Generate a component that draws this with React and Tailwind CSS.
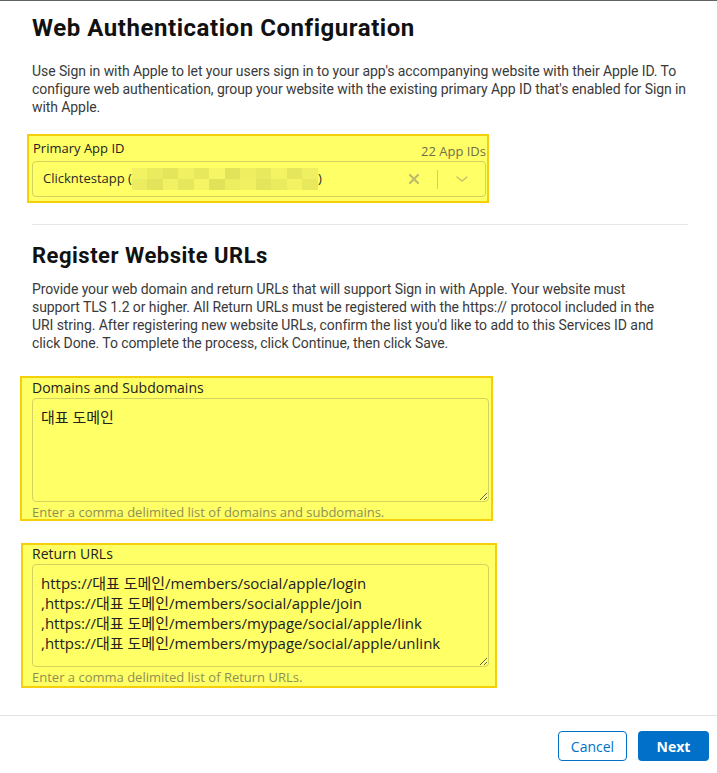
import React from "react";

const mosaic = [
  "#f2f262","#ebeb5f","#e5e55c","#f0f062","#e8e85d","#f5f565","#e3e35b","#eeee60","#e9e95e","#f3f363","#e6e65c","#efef61",
  "#ecec60","#e4e45c","#f1f163","#e7e75d","#f4f464","#e2e25a","#eded60","#f0f062","#e5e55c","#ebeb5f","#f2f262","#e8e85d",
];

function Mosaic() {
  return (
    <div className="grid grid-cols-12 w-[186px] h-[22px]">
      {mosaic.map((c, i) => (
        <div key={i} style={{ backgroundColor: c }} />
      ))}
    </div>
  );
}

export default function App() {
  const sans = "font-['Roboto',sans-serif]";
  const ui = "font-['Open_Sans','Noto_Sans_CJK_KR',sans-serif]";
  const returnUrls =
    "https://대표 도메인/members/social/apple/login\n,https://대표 도메인/members/social/apple/join\n,https://대표 도메인/members/mypage/social/apple/link\n,https://대표 도메인/members/mypage/social/apple/unlink";
  return (
    <div className="w-[717px] h-[773px] bg-white border-t border-[#5d6460] flex flex-col overflow-hidden">
      <div className={`flex-1 pl-8 pr-[29px] ${sans}`}>
        <h1 className="mt-[13px] text-[24px] leading-[28px] font-bold text-[#111111] tracking-[0.55px]">
          Web Authentication Configuration
        </h1>
        <p className="mt-[20px] text-[14px] leading-[18px] text-[#3a3a3a] tracking-[-0.08px]">
          Use Sign in with Apple to let your users sign in to your app's accompanying website with their Apple ID. To
          configure web authentication, group your website with the existing primary App ID that's enabled for Sign in
          with Apple.
        </p>

        <div className={`mt-[18px] ml-[-5px] w-[462px] h-[69px] border-2 border-[#f5cf0a] bg-[#ffff66] pl-[3px] pr-[1px] pt-[2px] ${ui}`}>
          <div className="flex items-end justify-between h-[23px]">
            <span className="pl-[1px] text-[13px] leading-[18px] text-[#222222] mb-[4px]">Primary App ID</span>
            <span className="text-[13px] leading-[18px] text-[#6f6f4a] mb-[1px]">22 App IDs</span>
          </div>
          <div className="w-[454px] h-[36px] border border-[#d2d25e] rounded-[4px] flex items-center pl-[10px]">
            <span className="text-[13px] text-[#2a2a2a]">Clickntestapp (</span>
            <Mosaic />
            <span className="text-[13px] text-[#2a2a2a]">)</span>
            <div className="ml-auto flex items-center h-full">
              <svg width="12" height="12" viewBox="0 0 12 12" className="mr-[17px]">
                <path d="M2 2 L10 10 M10 2 L2 10" stroke="#bcbc6a" strokeWidth="2.2" strokeLinecap="round" />
              </svg>
              <div className="w-px h-[19px] bg-[#cfcf62]" />
              <svg width="14" height="8" viewBox="0 0 14 8" className="ml-[17px] mr-[16px]">
                <path d="M2 2 L7 6 L12 2" stroke="#c4c46c" strokeWidth="1.6" fill="none" strokeLinecap="round" />
              </svg>
            </div>
          </div>
        </div>

        <div className="mt-[21px] h-px bg-[#e6e6e6]" />

        <h2 className="mt-[18px] text-[22px] leading-[26px] font-bold text-[#111111] tracking-[0.5px]">
          Register Website URLs
        </h2>
        <p className="mt-[11px] max-w-[630px] text-[14px] leading-[18px] text-[#3a3a3a] tracking-[-0.08px]">
          Provide your web domain and return URLs that will support Sign in with Apple. Your website must support TLS
          1.2 or higher. All Return URLs must be registered with the https:// protocol included in the URI string.
          After registering new website URLs, confirm the list you'd like to add to this Services ID and click Done. To
          complete the process, click Continue, then click Save.
        </p>

        <div className={`mt-[24px] ml-[-12px] w-[473px] h-[145px] border-2 border-[#f5cf0a] bg-[#ffff66] pl-[10px] pr-[2px] ${ui}`}>
          <div className="text-[14px] leading-[18px] text-[#222222] h-[20px] pt-[1px]">Domains and Subdomains</div>
          <textarea
            readOnly
            defaultValue="대표 도메인"
            className="block w-[457px] h-[104px] border border-[#d2d25e] rounded-[4px] bg-transparent px-[8px] pt-[8px] text-[15px] leading-[20px] text-[#222222] resize-y outline-none"
          />
          <div className="text-[13px] leading-[18px] text-[#8f8f55] mt-px">
            Enter a comma delimited list of domains and subdomains.
          </div>
        </div>

        <div className={`mt-[22px] ml-[-11px] w-[476px] h-[145px] border-2 border-[#f5cf0a] bg-[#ffff66] pl-[9px] pr-[2px] ${ui}`}>
          <div className="text-[14px] leading-[18px] text-[#222222] h-[19px]">Return URLs</div>
          <textarea
            readOnly
            defaultValue={returnUrls}
            className="block w-[457px] h-[103px] border border-[#d2d25e] rounded-[4px] bg-transparent px-[8px] pt-[8px] text-[15px] leading-[20px] text-[#222222] resize-y outline-none overflow-hidden"
          />
          <div className="text-[13px] leading-[18px] text-[#8f8f55] mt-px">
            Enter a comma delimited list of Return URLs.
          </div>
        </div>
      </div>

      <div className="h-[58px] border-t border-[#e3e3e3] flex justify-end items-start pt-[15px] pr-2 gap-[11px]">
        <button className={`w-[69px] h-[30px] rounded-[4px] border border-[#0070c9] text-[#0070c9] text-[14px] ${ui}`}>
          Cancel
        </button>
        <button className={`w-[71px] h-[30px] rounded-[4px] bg-[#0070c9] text-white text-[14px] font-bold ${ui}`}>
          Next
        </button>
      </div>
    </div>
  );
}
